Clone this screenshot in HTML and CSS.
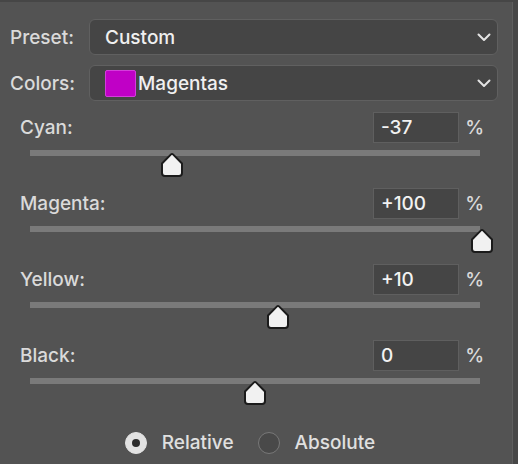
FILE: index.html
```html
<!DOCTYPE html>
<html>
<head>
<meta charset="utf-8">
<link rel="stylesheet" href="styles.css">
</head>
<body>
<div class="frame">
  <div class="panel">
    <div class="field-row">
      <span class="label">Preset:</span>
      <div class="dropdown">
        <span class="dd-text">Custom</span>
        <svg class="chev" width="14" height="9" viewBox="0 0 14 9"><path d="M1.5 1.5 L7 7 L12.5 1.5" fill="none" stroke="#e4e4e4" stroke-width="2" stroke-linecap="round" stroke-linejoin="round"/></svg>
      </div>
    </div>
    <div class="field-row">
      <span class="label">Colors:</span>
      <div class="dropdown">
        <span class="swatch"></span>
        <span class="dd-text tight">Magentas</span>
        <svg class="chev" width="14" height="9" viewBox="0 0 14 9"><path d="M1.5 1.5 L7 7 L12.5 1.5" fill="none" stroke="#e4e4e4" stroke-width="2" stroke-linecap="round" stroke-linejoin="round"/></svg>
      </div>
    </div>

    <div class="sliders">
      <div class="slider">
        <div class="s-head"><span class="s-label">Cyan:</span><span class="value">-37</span><span class="pct">%</span></div>
        <div class="track"><span class="thumb" style="left: 31.5%"><svg width="26" height="26" viewBox="0 0 26 26"><path d="M12 2.4 Q13 1.4 14 2.4 L23 11.5 V21 Q23 24 20 24 H6 Q3 24 3 21 V11.5 Z" fill="#f1f1f1" stroke="#1b1b1b" stroke-width="2" stroke-linejoin="round"/></svg></span></div>
      </div>
      <div class="slider">
        <div class="s-head"><span class="s-label">Magenta:</span><span class="value">+100</span><span class="pct">%</span></div>
        <div class="track"><span class="thumb" style="left: 100.4%"><svg width="26" height="26" viewBox="0 0 26 26"><path d="M12 2.4 Q13 1.4 14 2.4 L23 11.5 V21 Q23 24 20 24 H6 Q3 24 3 21 V11.5 Z" fill="#f1f1f1" stroke="#1b1b1b" stroke-width="2" stroke-linejoin="round"/></svg></span></div>
      </div>
      <div class="slider">
        <div class="s-head"><span class="s-label">Yellow:</span><span class="value">+10</span><span class="pct">%</span></div>
        <div class="track"><span class="thumb" style="left: 55%"><svg width="26" height="26" viewBox="0 0 26 26"><path d="M12 2.4 Q13 1.4 14 2.4 L23 11.5 V21 Q23 24 20 24 H6 Q3 24 3 21 V11.5 Z" fill="#f1f1f1" stroke="#1b1b1b" stroke-width="2" stroke-linejoin="round"/></svg></span></div>
      </div>
      <div class="slider">
        <div class="s-head"><span class="s-label">Black:</span><span class="value">0</span><span class="pct">%</span></div>
        <div class="track"><span class="thumb" style="left: 50%"><svg width="26" height="26" viewBox="0 0 26 26"><path d="M12 2.4 Q13 1.4 14 2.4 L23 11.5 V21 Q23 24 20 24 H6 Q3 24 3 21 V11.5 Z" fill="#f1f1f1" stroke="#1b1b1b" stroke-width="2" stroke-linejoin="round"/></svg></span></div>
      </div>
    </div>

    <div class="radios">
      <label class="radio"><span class="dot on"></span><span class="r-text">Relative</span></label>
      <label class="radio"><span class="dot"></span><span class="r-text">Absolute</span></label>
    </div>
  </div>
  <div class="edge"></div>
</div>
</body>
</html>
```

FILE: styles.css
```css
* { box-sizing: border-box; }
html, body {
  margin: 0;
  padding: 0;
  background: #535353;
  font-family: "Inter", "Liberation Sans", sans-serif;
  font-size: 19px;
  font-weight: 500;
  color: #dadada;
}
.frame {
  display: flex;
  width: 518px;
  height: 464px;
  border-top: 2px solid #464646;
}
.panel {
  width: 513px;
  border-right: 1px solid #5e5e5e;
  padding: 17px 14px 0 10px;
}
.edge {
  flex: 1;
  background: #474747;
}
.field-row {
  display: flex;
  align-items: center;
  height: 36px;
  margin-bottom: 10px;
}
.label {
  width: 79px;
  flex: none;
}
.dropdown {
  flex: 1;
  height: 36px;
  display: flex;
  align-items: center;
  background: #454545;
  border: 1px solid #606060;
  border-radius: 6px;
  padding: 0 6px 0 15px;
  color: #f0f0f0;
}
.dd-text { flex: 1; }
.dd-text.tight { margin-left: 2px; }
.swatch {
  width: 31px;
  height: 27px;
  background: #c000c6;
  border: 1px solid #d43ddb;
  border-radius: 2px;
  flex: none;
}
.chev { flex: none; }
.sliders {
  padding-top: 1px;
  padding-left: 10px;
}
.slider {
  height: 76px;
}
.s-head {
  display: flex;
  align-items: center;
  height: 31px;
}
.s-label { flex: 1; }
.value {
  width: 86px;
  height: 31px;
  background: #454545;
  border: 1px solid #5f5f5f;
  padding: 0 7px;
  line-height: 29px;
  color: #f2f2f2;
}
.pct {
  width: 39px;
  text-align: right;
  padding-right: 14px;
}
.track {
  position: relative;
  margin: 7px 0 0 10px;
  width: 450px;
  height: 6px;
  background: #7a7a7a;
}
.thumb {
  position: absolute;
  top: 2px;
  width: 26px;
  height: 26px;
  transform: translateX(-50%);
}
.thumb svg { display: block; }
.radios {
  display: flex;
  justify-content: center;
  align-items: center;
  gap: 24px;
  margin-top: 15px;
  padding-right: 8px;
}
.radio {
  display: flex;
  align-items: center;
  gap: 15px;
}
.dot {
  width: 22px;
  height: 22px;
  border-radius: 50%;
  border: 1px solid #787878;
  background: #494949;
  display: flex;
  align-items: center;
  justify-content: center;
}
.dot.on {
  background: #e2e2e2;
  border-color: #e2e2e2;
}
.dot.on::after {
  content: "";
  width: 8px;
  height: 8px;
  border-radius: 50%;
  background: #2c2c2c;
}
.r-text { color: #e0e0e0; }
```
